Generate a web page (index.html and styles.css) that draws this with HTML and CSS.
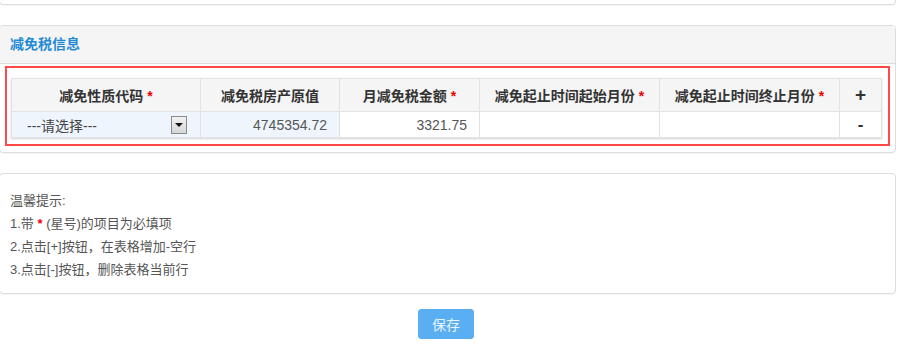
FILE: index.html
```html
<!DOCTYPE html>
<html lang="zh">
<head>
<meta charset="utf-8">
<title>减免税信息</title>
<link rel="stylesheet" href="styles.css">
</head>
<body>
<div class="page">
  <div class="panel panel-top"></div>

  <div class="panel panel-main">
    <div class="panel-heading">减免税信息</div>
    <div class="panel-body">
      <div class="highlight">
        <table class="grid">
          <colgroup>
            <col class="c1"><col class="c2"><col class="c3"><col class="c4"><col class="c5"><col class="c6">
          </colgroup>
          <thead>
            <tr>
              <th>减免性质代码 <span class="req">*</span></th>
              <th>减免税房产原值</th>
              <th>月减免税金额 <span class="req">*</span></th>
              <th>减免起止时间起始月份 <span class="req">*</span></th>
              <th>减免起止时间终止月份 <span class="req">*</span></th>
              <th class="op">+</th>
            </tr>
          </thead>
          <tbody>
            <tr>
              <td class="ro">
                <div class="select">
                  <span class="select-text">---请选择---</span>
                  <span class="select-btn"><span class="tri"></span></span>
                </div>
              </td>
              <td class="ro num">4745354.72</td>
              <td class="num">3321.75</td>
              <td></td>
              <td></td>
              <td class="op">-</td>
            </tr>
          </tbody>
        </table>
      </div>
    </div>
  </div>

  <div class="panel panel-tips">
    <p>温馨提示:</p>
    <p>1.带 <span class="req">*</span> (星号)的项目为必填项</p>
    <p>2.点击[+]按钮，在表格增加-空行</p>
    <p>3.点击[-]按钮，删除表格当前行</p>
  </div>

  <div class="actions">
    <button class="btn-save" type="button">保存</button>
  </div>
</div>
</body>
</html>
```
FILE: styles.css
```css
html, body {
  margin: 0;
  padding: 0;
  background: #fff;
}
body {
  font-family: "Liberation Sans", "Noto Sans CJK SC", sans-serif;
  font-size: 14px;
  color: #333;
}
.page {
  width: 897px;
  margin-left: -1px;
}
.panel {
  border: 1px solid #ddd;
  border-radius: 4px;
  box-sizing: border-box;
  background: #fff;
  box-shadow: 0 1px 1px rgba(0,0,0,0.04);
}
.panel-top {
  height: 15px;
  margin-top: -10px;
}
.panel-main {
  margin-top: 20px;
}
.panel-heading {
  height: 38px;
  box-sizing: border-box;
  background: #f5f5f5;
  border-bottom: 1px solid #ddd;
  border-radius: 3px 3px 0 0;
  padding-left: 10px;
  line-height: 37px;
  font-weight: bold;
  color: #1f8ad6;
}
.panel-body {
  padding: 2px 5px 6px 5px;
}
.highlight {
  border: 2px solid #ff4848;
  padding: 10px 7px 6px 4px;
}
.grid {
  width: 870px;
  border-collapse: collapse;
  table-layout: fixed;
  box-shadow: 0 1px 2px rgba(0,0,0,0.18);
}
.c1 { width: 189px; }
.c2 { width: 139px; }
.c3 { width: 140px; }
.c4 { width: 180px; }
.c5 { width: 180px; }
.c6 { width: 42px; }
.grid th, .grid td {
  border: 1px solid #e2e2e2;
  padding: 0 12px;
}
.grid th {
  height: 32px;
  background: #f5f5f5;
  font-weight: bold;
  color: #333;
  text-align: center;
  white-space: nowrap;
  padding: 0 2px;
}
.grid td {
  height: 25px;
  color: #555;
}
.grid td.ro {
  background: #eef5fd;
}
.grid td.num {
  text-align: right;
}
.grid .op {
  text-align: center;
  font-size: 19px;
  font-weight: bold;
  color: #333;
  padding: 0;
}
.grid td.op {
  font-size: 17px;
}
.req {
  color: #e00;
  font-weight: bold;
}
.select {
  display: flex;
  align-items: center;
  justify-content: space-between;
  padding-left: 3px;
}
.select-text {
  color: #444;
}
.select-btn {
  width: 14px;
  height: 16px;
  border: 1px solid #8a8a8a;
  background: linear-gradient(#f2f2f2, #d6d6d6);
  display: flex;
  align-items: center;
  justify-content: center;
  margin-right: 1px;
}
.tri {
  width: 0;
  height: 0;
  border-left: 4px solid transparent;
  border-right: 4px solid transparent;
  border-top: 4px solid #111;
}
.panel-tips {
  margin-top: 20px;
  height: 121px;
  padding: 15px 0 0 10px;
  color: #555;
  font-size: 13px;
}
.panel-tips p {
  margin: 0;
  line-height: 23px;
}
.actions {
  display: flex;
  justify-content: center;
  margin-top: 15px;
  padding-right: 3px;
}
.btn-save {
  width: 56px;
  height: 30px;
  border: 1px solid #5aaef2;
  border-radius: 3px;
  background: #5aaef2;
  color: #eaf4fd;
  font-family: "Liberation Sans", "Noto Sans CJK SC", sans-serif;
  font-size: 14px;
  padding: 0;
}
```
